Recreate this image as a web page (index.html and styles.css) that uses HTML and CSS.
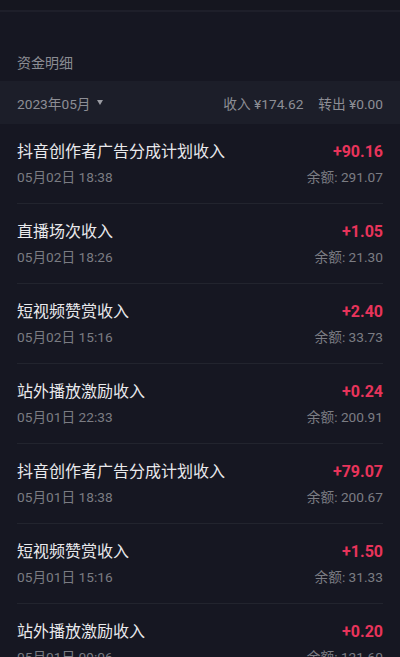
FILE: index.html
```html
<!DOCTYPE html>
<html lang="zh-CN">
<head>
    <meta charset="UTF-8">
    <meta name="viewport" content="width=device-width, initial-scale=1.0">
    <title>资金明细</title>
    <link rel="stylesheet" href="styles.css">
</head>
<body>
    <div class="top-bar"></div>

    <div class="section-title">资金明细</div>

    <div class="month-bar">
        <div class="month-picker">2023年05月 <span class="caret"></span></div>
        <div class="month-sum">
            <span>收入 ¥174.62</span>
            <span>转出 ¥0.00</span>
        </div>
    </div>

    <div class="record-list">
        <div class="record">
            <div class="record-row">
                <span class="record-name">抖音创作者广告分成计划收入</span>
                <span class="record-amount">+90.16</span>
            </div>
            <div class="record-row">
                <span class="record-time">05月02日 18:38</span>
                <span class="record-balance">余额: 291.07</span>
            </div>
        </div>
        <div class="record">
            <div class="record-row">
                <span class="record-name">直播场次收入</span>
                <span class="record-amount">+1.05</span>
            </div>
            <div class="record-row">
                <span class="record-time">05月02日 18:26</span>
                <span class="record-balance">余额: 21.30</span>
            </div>
        </div>
        <div class="record">
            <div class="record-row">
                <span class="record-name">短视频赞赏收入</span>
                <span class="record-amount">+2.40</span>
            </div>
            <div class="record-row">
                <span class="record-time">05月02日 15:16</span>
                <span class="record-balance">余额: 33.73</span>
            </div>
        </div>
        <div class="record">
            <div class="record-row">
                <span class="record-name">站外播放激励收入</span>
                <span class="record-amount">+0.24</span>
            </div>
            <div class="record-row">
                <span class="record-time">05月01日 22:33</span>
                <span class="record-balance">余额: 200.91</span>
            </div>
        </div>
        <div class="record">
            <div class="record-row">
                <span class="record-name">抖音创作者广告分成计划收入</span>
                <span class="record-amount">+79.07</span>
            </div>
            <div class="record-row">
                <span class="record-time">05月01日 18:38</span>
                <span class="record-balance">余额: 200.67</span>
            </div>
        </div>
        <div class="record">
            <div class="record-row">
                <span class="record-name">短视频赞赏收入</span>
                <span class="record-amount">+1.50</span>
            </div>
            <div class="record-row">
                <span class="record-time">05月01日 15:16</span>
                <span class="record-balance">余额: 31.33</span>
            </div>
        </div>
        <div class="record">
            <div class="record-row">
                <span class="record-name">站外播放激励收入</span>
                <span class="record-amount">+0.20</span>
            </div>
            <div class="record-row">
                <span class="record-time">05月01日 09:06</span>
                <span class="record-balance">余额: 121.60</span>
            </div>
        </div>
    </div>
</body>
</html>
```

FILE: styles.css
```css
html, body {
    margin: 0;
    padding: 0;
    background: #161722;
    height: 657px;
    overflow: hidden;
}
body {
    font-family: Roboto, "Noto Sans CJK SC", sans-serif;
    color: #e6e6ea;
}
.top-bar {
    height: 10px;
    background: #15161f;
    border-bottom: 2px solid #1e1f2a;
}
.section-title {
    padding: 41px 17px 0;
    height: 28px;
    font-size: 14px;
    line-height: 20px;
    color: #8b8c93;
}
.month-bar {
    display: flex;
    justify-content: space-between;
    align-items: center;
    height: 43px;
    padding: 0 17px;
    background: #1c1e29;
    font-size: 13.7px;
    color: #8d8e95;
}
.month-picker {
    display: flex;
    align-items: center;
    gap: 6px;
}
.caret {
    width: 0;
    height: 0;
    border-left: 3.5px solid transparent;
    border-right: 3.5px solid transparent;
    border-top: 5px solid #9a9ba2;
}
.month-sum {
    display: flex;
    gap: 15px;
}
.record-list {
    padding: 0 17px;
}
.record {
    height: 80px;
    box-sizing: border-box;
    padding-top: 17px;
    border-bottom: 1px solid #22242e;
    display: flex;
    flex-direction: column;
}
.record-row {
    display: flex;
    justify-content: space-between;
    align-items: center;
}
.record-row + .record-row {
    margin-top: 4px;
}
.record-name {
    font-size: 16px;
    line-height: 22px;
    color: #e9e9ec;
}
.record-amount {
    font-size: 16px;
    line-height: 22px;
    font-weight: 700;
    color: #e8345b;
}
.record-time,
.record-balance {
    font-size: 13.7px;
    line-height: 20px;
    color: #7b7c83;
}
```
